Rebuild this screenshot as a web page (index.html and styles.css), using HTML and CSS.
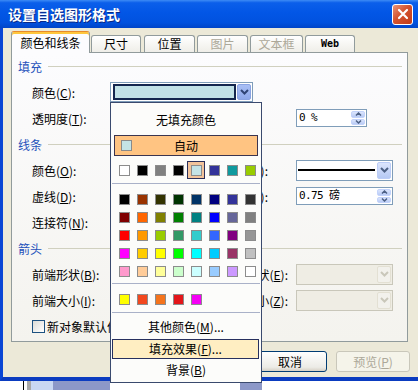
FILE: index.html
```html
<!DOCTYPE html>
<html lang="zh-CN">
<head>
  <meta charset="UTF-8">
  <title>设置自选图形格式</title>
  <link rel="stylesheet" href="styles.css">
</head>
<body>
  <div class="screen">
    <div class="window">
      <div class="titlebar">
        <span class="title">设置自选图形格式</span>
        <span class="close-btn">
          <svg width="12" height="12" viewBox="0 0 12 12"><path d="M2 2 L10 10 M10 2 L2 10" stroke="#fff" stroke-width="2.2" stroke-linecap="round"></path></svg>
        </span>
      </div>

      <div class="dialog">
        <div class="tabs">
          <div class="tab active">颜色和线条</div>
          <div class="tab t-size">尺寸</div>
          <div class="tab t-pos">位置</div>
          <div class="tab t-pic off">图片</div>
          <div class="tab t-text off">文本框</div>
          <div class="tab t-web">Web</div>
        </div>

        <div class="panel">
          <div class="group-title">填充</div>
          <div class="row">
            <label>颜色(<u>C</u>):</label>
            <div class="color-combo">
              <span class="swatch"></span>
              <span class="drop-btn pressed">
                <svg width="9" height="6" viewBox="0 0 9 6"><polyline points="1,1 4.5,4.5 8,1" fill="none" stroke="currentColor" stroke-width="2"></polyline></svg>
              </span>
            </div>
          </div>
          <div class="row">
            <label>透明度(<u>T</u>):</label>
            <div class="spin pct">
              <span class="spin-val">0 %</span>
              <span class="spin-btns">
                <span><svg width="7" height="4" viewBox="0 0 7 4"><polyline points="1,3.5 3.5,1 6,3.5" fill="none" stroke="currentColor" stroke-width="1.5"></polyline></svg></span>
                <span><svg width="7" height="4" viewBox="0 0 7 4"><polyline points="1,0.5 3.5,3 6,0.5" fill="none" stroke="currentColor" stroke-width="1.5"></polyline></svg></span>
              </span>
            </div>
          </div>

          <div class="group-title">线条</div>
          <div class="row">
            <label>颜色(<u>O</u>):</label>
            <span class="rlabel near">线型(<u>S</u>):</span>
            <div class="line-combo">
              <span class="line-sample"></span>
              <span class="drop-btn">
                <svg width="9" height="6" viewBox="0 0 9 6"><polyline points="1,1 4.5,4.5 8,1" fill="none" stroke="currentColor" stroke-width="2"></polyline></svg>
              </span>
            </div>
          </div>
          <div class="row">
            <label>虚线(<u>D</u>):</label>
            <span class="rlabel near">粗细(<u>W</u>):</span>
            <div class="spin weight">
              <span class="spin-val">0.75 磅</span>
              <span class="spin-btns">
                <span><svg width="7" height="4" viewBox="0 0 7 4"><polyline points="1,3.5 3.5,1 6,3.5" fill="none" stroke="currentColor" stroke-width="1.5"></polyline></svg></span>
                <span><svg width="7" height="4" viewBox="0 0 7 4"><polyline points="1,0.5 3.5,3 6,0.5" fill="none" stroke="currentColor" stroke-width="1.5"></polyline></svg></span>
              </span>
            </div>
          </div>
          <div class="row">
            <label>连接符(<u>N</u>):</label>
          </div>

          <div class="group-title">箭头</div>
          <div class="row">
            <label>前端形状(<u>B</u>):</label>
            <span class="rlabel">后端形状(<u>E</u>):</span>
            <div class="line-combo disabled">
              <span class="line-sample"></span>
              <span class="drop-btn">
                <svg width="9" height="6" viewBox="0 0 9 6"><polyline points="1,1 4.5,4.5 8,1" fill="none" stroke="currentColor" stroke-width="2"></polyline></svg>
              </span>
            </div>
          </div>
          <div class="row">
            <label>前端大小(<u>I</u>):</label>
            <span class="rlabel">后端大小(<u>Z</u>):</span>
            <div class="line-combo disabled">
              <span class="line-sample"></span>
              <span class="drop-btn">
                <svg width="9" height="6" viewBox="0 0 9 6"><polyline points="1,1 4.5,4.5 8,1" fill="none" stroke="currentColor" stroke-width="2"></polyline></svg>
              </span>
            </div>
          </div>
          <div class="row">
            <label class="check-label"><span class="check"></span>新对象默认值(<u>F</u>)</label>
          </div>
        </div>

        <div class="buttons">
          <button class="btn">取消</button>
          <button class="btn" disabled>预览(<u>P</u>)</button>
        </div>
      </div>
    </div>

    <div class="desk">
      <span class="d-gap1"></span>
      <span class="d-tick"></span>
      <span class="d-gap2"></span>
      <span class="d-gray"></span>
      <span class="d-light"></span>
      <span class="d-bar"></span>
      <span class="d-gap3"></span>
      <span class="d-bar2"></span>
    </div>

    <!-- 颜色下拉面板 -->
    <div class="color-popup">
      <div class="no-fill">无填充颜色</div>
      <div class="auto-row">
        <span class="auto-chip"></span>
        <span class="auto-text">自动</span>
      </div>
      <div class="swatches first">
        <span class="cell"><i style="background:#ffffff"></i></span>
        <span class="cell"><i style="background:#000000"></i></span>
        <span class="cell"><i style="background:#808080"></i></span>
        <span class="cell"><i style="background:#000000"></i></span>
        <span class="cell sel"><i style="background:#c4e3e6"></i></span>
        <span class="cell"><i style="background:#333399"></i></span>
        <span class="cell"><i style="background:#109a9e"></i></span>
        <span class="cell"><i style="background:#99cc00"></i></span>
      </div>
      <div class="sep"></div>
      <div class="palette">
        <div class="swatches">
          <span class="cell"><i style="background:#000000"></i></span>
          <span class="cell"><i style="background:#993300"></i></span>
          <span class="cell"><i style="background:#333300"></i></span>
          <span class="cell"><i style="background:#003300"></i></span>
          <span class="cell"><i style="background:#003366"></i></span>
          <span class="cell"><i style="background:#000080"></i></span>
          <span class="cell"><i style="background:#333399"></i></span>
          <span class="cell"><i style="background:#333333"></i></span>
        </div>
        <div class="swatches">
          <span class="cell"><i style="background:#800000"></i></span>
          <span class="cell"><i style="background:#ff6600"></i></span>
          <span class="cell"><i style="background:#808000"></i></span>
          <span class="cell"><i style="background:#008000"></i></span>
          <span class="cell"><i style="background:#008080"></i></span>
          <span class="cell"><i style="background:#0000ff"></i></span>
          <span class="cell"><i style="background:#666699"></i></span>
          <span class="cell"><i style="background:#808080"></i></span>
        </div>
        <div class="swatches">
          <span class="cell"><i style="background:#ff0000"></i></span>
          <span class="cell"><i style="background:#ff9900"></i></span>
          <span class="cell"><i style="background:#99cc00"></i></span>
          <span class="cell"><i style="background:#339966"></i></span>
          <span class="cell"><i style="background:#33cccc"></i></span>
          <span class="cell"><i style="background:#3366ff"></i></span>
          <span class="cell"><i style="background:#800080"></i></span>
          <span class="cell"><i style="background:#969696"></i></span>
        </div>
        <div class="swatches">
          <span class="cell"><i style="background:#ff00ff"></i></span>
          <span class="cell"><i style="background:#ffcc00"></i></span>
          <span class="cell"><i style="background:#ffff00"></i></span>
          <span class="cell"><i style="background:#00ff00"></i></span>
          <span class="cell"><i style="background:#00ffff"></i></span>
          <span class="cell"><i style="background:#00ccff"></i></span>
          <span class="cell"><i style="background:#993366"></i></span>
          <span class="cell"><i style="background:#c0c0c0"></i></span>
        </div>
        <div class="swatches">
          <span class="cell"><i style="background:#ff99cc"></i></span>
          <span class="cell"><i style="background:#ffcc99"></i></span>
          <span class="cell"><i style="background:#ffff99"></i></span>
          <span class="cell"><i style="background:#ccffcc"></i></span>
          <span class="cell"><i style="background:#ccffff"></i></span>
          <span class="cell"><i style="background:#99ccff"></i></span>
          <span class="cell"><i style="background:#cc99ff"></i></span>
          <span class="cell"><i style="background:#ffffff"></i></span>
        </div>
      </div>
      <div class="sep"></div>
      <div class="swatches recent">
        <span class="cell"><i style="background:#ffff00"></i></span>
        <span class="cell"><i style="background:#f2481e"></i></span>
        <span class="cell"><i style="background:#f5741c"></i></span>
        <span class="cell"><i style="background:#e3161a"></i></span>
        <span class="cell"><i style="background:#f500f5"></i></span>
      </div>
      <div class="sep"></div>
      <div class="menu-item more">其他颜色(<u>M</u>)...</div>
      <div class="menu-item hover">填充效果(<u>F</u>)...</div>
      <div class="menu-item">背景(<u>B</u>)</div>
    </div>
  </div>
</body>
</html>
```

FILE: styles.css
```css
* {
  box-sizing: border-box;
  margin: 0;
  padding: 0;
}

body {
  width: 418px;
  height: 390px;
  overflow: hidden;
  background: #fff;
  font-family: "Noto Sans CJK SC", "Liberation Sans", sans-serif;
  font-size: 12px;
  color: #000;
}

u {
  text-decoration: underline;
  text-underline-offset: 1px;
}

.screen {
  position: relative;
  width: 418px;
  height: 390px;
  overflow: hidden;
}

.window {
  width: 424px;
}

/* 标题栏 */
.titlebar {
  height: 28px;
  display: flex;
  align-items: center;
  padding: 0 11px 0 8px;
  background: linear-gradient(180deg, #3d8bf5 0%, #0b5fea 10%, #0256e6 45%, #0152df 80%, #0045c8 100%);
}

.title {
  color: #fff;
  font-size: 14px;
  font-weight: bold;
  line-height: 1;
  text-shadow: 1px 1px 0 #0a2a86;
}

.close-btn {
  margin-left: auto;
  width: 21px;
  height: 21px;
  display: flex;
  align-items: center;
  justify-content: center;
  border: 1px solid #fff;
  border-radius: 3px;
  background: linear-gradient(135deg, #ea9479 0%, #d4532f 45%, #c13a17 100%);
}

/* 对话框主体 */
.dialog {
  height: 353px;
  padding: 3px 0 0 8px;
  background: #ece9d8;
  border-left: 3px solid #0a46d4;
  border-right: 3px solid #0a46d4;
  border-bottom: 4px solid #0b3cc0;
}

.tabs {
  display: flex;
  align-items: flex-end;
  height: 21px;
  position: relative;
  z-index: 1;
}

.tab {
  height: 17px;
  margin-left: 2px;
  display: flex;
  align-items: center;
  justify-content: center;
  border: 1px solid #919b9c;
  border-bottom: none;
  border-radius: 3px 3px 0 0;
  background: linear-gradient(#ffffff, #efeee8);
  line-height: 1;
}

.tab.active {
  width: 79px;
  height: 22px;
  margin-left: 0;
  margin-bottom: -1px;
  background: #fcfcfe;
  border-top: 1px solid #e68b2c;
  box-shadow: inset 0 2px 0 #ffc73c;
  padding-top: 1px;
}

.t-size { width: 50px; margin-left: 1px; }
.t-pos { width: 51px; margin-left: 3px; }
.t-pic { width: 51px; }
.t-text { width: 53px; }
.t-web {
  width: 50px;
  font-family: "DejaVu Sans Mono", monospace;
  font-size: 10px;
  font-weight: bold;
}

.tab.off {
  color: #aca899;
}

.panel {
  width: 397px;
  height: 290px;
  border: 1px solid #919b9c;
  background: linear-gradient(#fcfcfe, #f4f3ee);
}

.group-title {
  height: 26px;
  display: flex;
  align-items: center;
  padding: 0 5px 0 6px;
  color: #1f52bb;
}

.group-title::after {
  content: "";
  flex: 1;
  height: 1px;
  margin-left: 6px;
  background: #d0d0bf;
}

.row {
  display: grid;
  grid-template-columns: 78px 108px 78px auto;
  align-items: center;
  height: 26px;
  padding-left: 20px;
}

.row label {
  grid-column: 1;
  white-space: nowrap;
}

.rlabel {
  grid-column: 3;
  justify-self: end;
  margin-right: 8px;
  white-space: nowrap;
}

.rlabel.near {
  margin-right: 28px;
}

/* 颜色组合框 */
.color-combo {
  grid-column: 2 / 4;
  width: 143px;
  height: 20px;
  display: flex;
  align-items: center;
  padding: 1px;
  border: 1px solid #7f9db9;
  background: #fff;
}

.color-combo .swatch {
  width: 123px;
  height: 16px;
  margin-left: 1px;
  border: 2px solid #14264e;
  background: #c1e1e6;
}

.drop-btn {
  display: flex;
  align-items: center;
  justify-content: center;
  width: 14px;
  height: 100%;
  margin-left: auto;
  border: 1px solid #bccdf7;
  border-radius: 2px;
  background: linear-gradient(#dbe5fd, #b6c9f4);
  color: #4d6185;
}

.drop-btn.pressed {
  border-color: #8aa3e2;
  background: linear-gradient(#a9bff5, #8ea8ea);
  color: #2f4475;
}

.spin {
  grid-column: 4;
  display: flex;
  height: 18px;
  border: 1px solid #7f9db9;
  background: #fff;
}

.spin.pct { width: 71px; }
.spin.weight { width: 97px; }

.spin-val {
  flex: 1;
  padding-left: 2px;
  font-family: "DejaVu Sans Mono", "Noto Sans CJK SC", monospace;
  font-size: 11px;
  letter-spacing: -0.6px;
  line-height: 16px;
}

.spin-btns {
  width: 15px;
  display: flex;
  flex-direction: column;
  gap: 1px;
  padding: 1px 1px 1px 0;
}

.spin-btns span {
  flex: 1;
  display: flex;
  align-items: center;
  justify-content: center;
  border: 1px solid #c3d3fb;
  border-radius: 2px;
  background: linear-gradient(#dbe5fd, #b9cbf5);
  color: #4d6185;
}

.line-combo {
  grid-column: 4;
  width: 97px;
  height: 21px;
  display: flex;
  align-items: center;
  padding: 1px;
  border: 1px solid #7f9db9;
  background: #fff;
}

.line-sample {
  flex: 1;
  height: 2px;
  margin-right: 2px;
  background: #000;
}

.line-combo.disabled {
  border-color: #c9c7ba;
  background: #efede4;
}

.line-combo.disabled .line-sample {
  background: transparent;
}

.line-combo.disabled .drop-btn {
  border-color: #e3e0d3;
  background: #f2f1ec;
  color: #c9c7ba;
}

.row .check-label {
  grid-column: 1 / 4;
  display: flex;
  align-items: center;
  gap: 2px;
}

.check {
  flex: none;
  width: 13px;
  height: 13px;
  border: 1px solid #1c5180;
  background: linear-gradient(135deg, #dcdcd7, #ffffff);
}

/* 底部按钮 */
.buttons {
  width: 399px;
  display: flex;
  justify-content: flex-end;
  gap: 9px;
  margin-top: 9px;
}

.btn {
  width: 74px;
  height: 21px;
  border: 1px solid #003c74;
  border-radius: 3px;
  background: linear-gradient(#ffffff, #ecebe6 80%, #d6d0c5);
  font-family: "Noto Sans CJK SC", sans-serif;
  font-size: 12px;
  color: #000;
}

.btn:disabled {
  border-color: #c9c7ba;
  background: #f5f4ea;
  color: #aca899;
}

/* 窗口下方的桌面 */
.desk {
  display: flex;
  height: 9px;
}

.d-gap1 { width: 23px; }
.d-tick { width: 1px; background: #000; }
.d-gap2 { width: 3px; }
.d-gray { width: 4px; background: #a8a8a8; }
.d-light { width: 22px; background: #c9d8f2; }
.d-bar { width: 57px; background: #8c98c8; }
.d-gap3 { width: 130px; }
.d-bar2 { width: 22px; background: #8c98c8; }

/* 颜色下拉面板 */
.color-popup {
  position: absolute;
  left: 110px;
  top: 102px;
  z-index: 10;
  width: 152px;
  height: 281px;
  display: flex;
  flex-direction: column;
  border: 1px solid #3a4a6e;
  background: #fcfcfa;
}

.no-fill {
  height: 30px;
  margin-top: 2px;
  line-height: 30px;
  text-align: center;
}

.auto-row {
  height: 21px;
  margin: 0 3px;
  display: flex;
  align-items: center;
  border: 1px solid #3b3550;
  background: #ffc482;
}

.auto-chip {
  width: 11px;
  height: 11px;
  margin-left: 6px;
  border: 1px solid #8a8a8a;
  background: #c4e3e6;
}

.auto-text {
  flex: 1;
  text-align: center;
  padding-right: 17px;
}

.swatches {
  display: flex;
  height: 18px;
  padding-left: 4px;
}

.swatches.first {
  margin-top: 5px;
}

.swatches.recent {
  margin-top: 6px;
}

.palette {
  margin-top: 6px;
}

.cell {
  width: 18px;
  height: 18px;
  display: flex;
  align-items: center;
  justify-content: center;
}

.cell i {
  width: 11px;
  height: 11px;
  border: 1px solid #8c8c8c;
}

.cell.sel {
  border: 1px solid #2a2f5a;
  background: #f2c39a;
}

.sep {
  height: 1px;
  margin: 4px 1px 0;
  background: #a9b1c8;
}

.palette + .sep {
  margin-top: 3px;
}

.menu-item {
  height: 22px;
  line-height: 22px;
  text-align: center;
}

.menu-item.more {
  height: 24px;
  line-height: 24px;
  margin-top: 2px;
}

.menu-item.hover {
  height: 20px;
  line-height: 18px;
  margin: 0 2px 0 1px;
  border: 1px solid #27305e;
  background: #ffeec2;
}
```
